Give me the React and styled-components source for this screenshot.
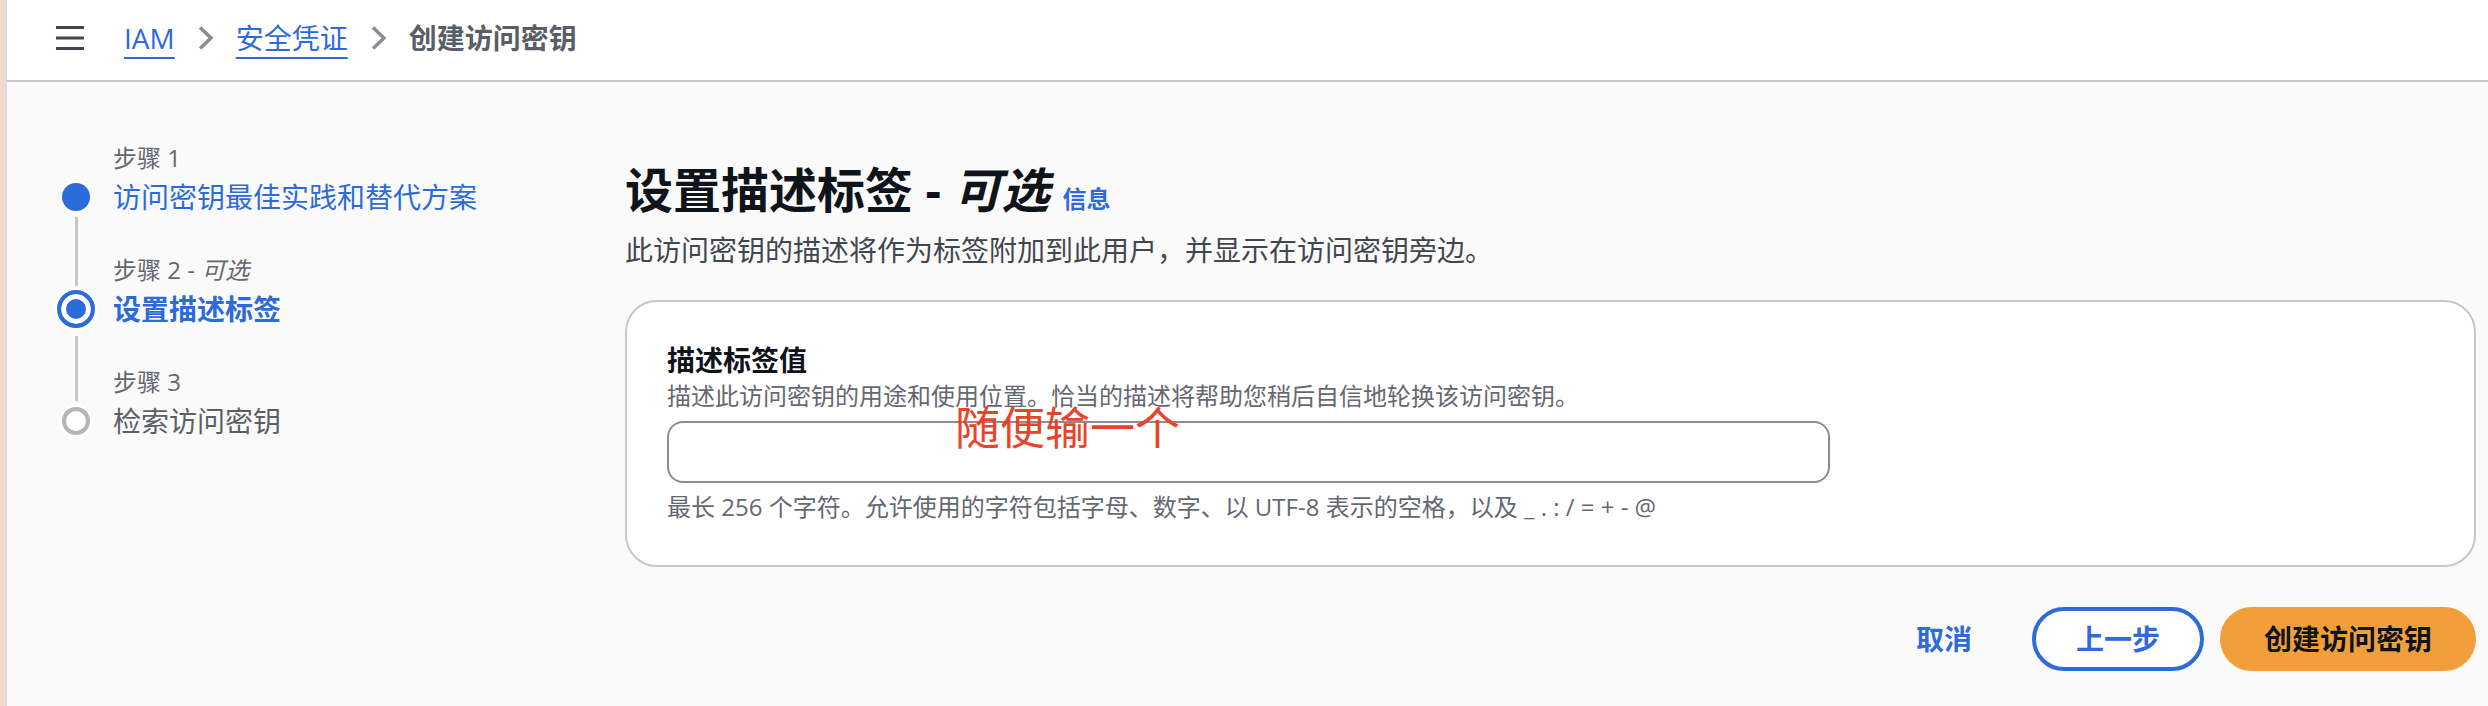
import React from 'react';
import styled, { createGlobalStyle } from 'styled-components';

const blue = '#2c6bd9';
const border = '#c6c6cd';

const GlobalStyle = createGlobalStyle`
  html, body {
    margin: 0;
    padding: 0;
    background: #fafafa;
  }
  body {
    font-family: "Open Sans", "Noto Sans CJK SC", sans-serif;
    color: #0f141a;
  }
  * {
    box-sizing: border-box;
  }
`;

const Frame = styled.div`
  display: flex;
  min-height: 706px;
`;

const Strip = styled.div`
  flex: 0 0 7px;
  background: linear-gradient(to right, #f2d7d2 6px, #dcdcdf 6px);
`;

const Page = styled.div`
  flex: 1;
  display: flex;
  flex-direction: column;
`;

const TopBar = styled.header`
  height: 82px;
  background: #fff;
  border-bottom: 2px solid ${border};
  display: flex;
  align-items: center;
  padding: 0 0 4px 49px;
`;

const MenuButton = styled.button`
  border: 0;
  background: none;
  padding: 0;
  margin-right: 40px;
  display: flex;
  color: #414750;
`;

const Crumbs = styled.nav`
  display: flex;
  align-items: center;
  font-size: 28px;
  line-height: 40px;
`;

const CrumbLink = styled.a`
  color: ${blue};
  text-decoration: underline;
  text-decoration-thickness: 2px;
  text-underline-offset: 8px;
`;

const CrumbCurrent = styled.span`
  color: #5a5e66;
  font-weight: 700;
`;

const Chevron = styled.svg`
  margin: 0 23px;
  color: #8c8c94;
`;

const Body = styled.div`
  flex: 1;
  display: grid;
  grid-template-columns: 563px 1fr;
  padding: 0 12px 0 55px;
`;

const StepList = styled.ol`
  list-style: none;
  margin: 0;
  padding: 60px 0 0;
`;

const Step = styled.li`
  display: grid;
  grid-template-columns: 28px 1fr;
  column-gap: 23px;
`;

const Rail = styled.div`
  grid-column: 1;
  grid-row: 1;
  display: flex;
  justify-content: center;
`;

const Connector = styled.span`
  width: 3px;
  background: ${border};
  margin: ${({ $after }) => ($after === 'active' ? '0 0 3px' : '7px 0 0')};
`;

const StepLabel = styled.div`
  grid-column: 2;
  grid-row: 1;
  padding-top: ${({ $first }) => ($first ? 0 : 37)}px;
  margin-bottom: 3px;
  font-size: 24px;
  line-height: 32px;
  color: #656871;
`;

const Marker = styled.span`
  grid-column: 1;
  grid-row: 2;
  align-self: center;
  justify-self: center;
  border-radius: 50%;
  width: ${({ $state }) => ($state === 'active' ? 38 : 28)}px;
  height: ${({ $state }) => ($state === 'active' ? 38 : 28)}px;
  border: ${({ $state }) => ($state === 'done' ? 0 : 4)}px solid
    ${({ $state }) => ($state === 'pending' ? '#b4b4bb' : blue)};
  background: ${({ $state }) => ($state === 'pending' ? '#fff' : blue)};
  box-shadow: ${({ $state }) => ($state === 'active' ? 'inset 0 0 0 5px #fff, ' : '')}0 0 0 3px #fff;
`;

const StepTitle = styled.div`
  grid-column: 2;
  grid-row: 2;
  font-size: 28px;
  line-height: 40px;
  font-weight: ${({ $state }) => ($state === 'active' ? 700 : 400)};
  color: ${({ $state }) => ($state === 'pending' ? '#5b5f67' : blue)};
`;

const Content = styled.main`
  padding-top: 80px;
`;

const Heading = styled.h1`
  margin: 0;
  font-size: 48px;
  line-height: 56px;
  font-weight: 700;
  color: #0f141a;
`;

const InfoLink = styled.a`
  margin-left: 13px;
  font-size: 24px;
  font-weight: 700;
  color: ${blue};
`;

const Lead = styled.p`
  margin: 3px 0 0;
  font-size: 28px;
  line-height: 40px;
  color: #42464f;
`;

const Card = styled.section`
  position: relative;
  margin-top: 30px;
  background: #fff;
  border: 2px solid ${border};
  border-radius: 32px;
  padding: 38px 40px 42px;
`;

const FieldLabel = styled.label`
  display: block;
  font-size: 28px;
  line-height: 40px;
  font-weight: 700;
  color: #0f141a;
`;

const Hint = styled.div`
  font-size: 24px;
  line-height: 32px;
  color: #656871;
  margin-top: ${({ $below }) => ($below ? 8 : 0)}px;
`;

const TextInput = styled.input`
  display: block;
  margin-top: 9px;
  width: 1163px;
  height: 62px;
  border: 2px solid #8c8c94;
  border-radius: 16px;
  background: #fff;
  padding: 0 24px;
  font: inherit;
  font-size: 28px;
`;

const Annotation = styled.span`
  position: absolute;
  left: 328px;
  top: 103px;
  font-size: 45px;
  line-height: 45px;
  color: #e8432b;
  pointer-events: none;
`;

const Actions = styled.div`
  margin-top: 40px;
  display: flex;
  justify-content: flex-end;
  gap: 16px;
`;

const variants = {
  link: { bg: 'transparent', line: 'transparent', text: blue },
  normal: { bg: '#fff', line: blue, text: blue },
  primary: { bg: '#f29f3b', line: '#f29f3b', text: '#0f141a' },
};

const Button = styled.button`
  font-family: inherit;
  font-size: 28px;
  line-height: 40px;
  font-weight: 700;
  padding: 8px 40px;
  border-radius: 40px;
  border: 4px solid ${({ $variant }) => variants[$variant].line};
  background: ${({ $variant }) => variants[$variant].bg};
  color: ${({ $variant }) => variants[$variant].text};
  cursor: pointer;
`;

const steps = [
  { label: '步骤 1', title: '访问密钥最佳实践和替代方案', state: 'done' },
  { label: '步骤 2', optional: true, title: '设置描述标签', state: 'active' },
  { label: '步骤 3', title: '检索访问密钥', state: 'pending' },
];

const App = () => (
  <>
    <GlobalStyle />
    <Frame>
      <Strip />
      <Page>
        <TopBar>
          <MenuButton aria-label="menu">
            <svg width="28" height="24" viewBox="0 0 28 24">
              <rect y="0" width="28" height="3" fill="currentColor" />
              <rect y="10.5" width="28" height="3" fill="currentColor" />
              <rect y="21" width="28" height="3" fill="currentColor" />
            </svg>
          </MenuButton>
          <Crumbs>
            <CrumbLink>IAM</CrumbLink>
            <Chevron width="15" height="24" viewBox="0 0 15 24">
              <polyline points="2,1.5 13,12 2,22.5" fill="none" stroke="currentColor" strokeWidth="3.5" />
            </Chevron>
            <CrumbLink>安全凭证</CrumbLink>
            <Chevron width="15" height="24" viewBox="0 0 15 24">
              <polyline points="2,1.5 13,12 2,22.5" fill="none" stroke="currentColor" strokeWidth="3.5" />
            </Chevron>
            <CrumbCurrent>创建访问密钥</CrumbCurrent>
          </Crumbs>
        </TopBar>

        <Body>
          <StepList>
            {steps.map((step, i) => (
              <Step key={step.label}>
                {i > 0 && (
                  <Rail>
                    <Connector $after={step.state} />
                  </Rail>
                )}
                <StepLabel $first={i === 0}>
                  {step.label}
                  {step.optional && (
                    <>
                      {' - '}
                      <i>可选</i>
                    </>
                  )}
                </StepLabel>
                <Marker $state={step.state} />
                <StepTitle $state={step.state}>{step.title}</StepTitle>
              </Step>
            ))}
          </StepList>

          <Content>
            <Heading>
              设置描述标签 - <i>可选</i>
              <InfoLink>信息</InfoLink>
            </Heading>
            <Lead>此访问密钥的描述将作为标签附加到此用户，并显示在访问密钥旁边。</Lead>

            <Card>
              <FieldLabel htmlFor="desc">描述标签值</FieldLabel>
              <Hint>描述此访问密钥的用途和使用位置。恰当的描述将帮助您稍后自信地轮换该访问密钥。</Hint>
              <TextInput id="desc" />
              <Hint $below>最长 256 个字符。允许使用的字符包括字母、数字、以 UTF-8 表示的空格，以及 _ . : / = + - @</Hint>
              <Annotation>随便输一个</Annotation>
            </Card>

            <Actions>
              <Button $variant="link">取消</Button>
              <Button $variant="normal">上一步</Button>
              <Button $variant="primary">创建访问密钥</Button>
            </Actions>
          </Content>
        </Body>
      </Page>
    </Frame>
  </>
);

export default App;
